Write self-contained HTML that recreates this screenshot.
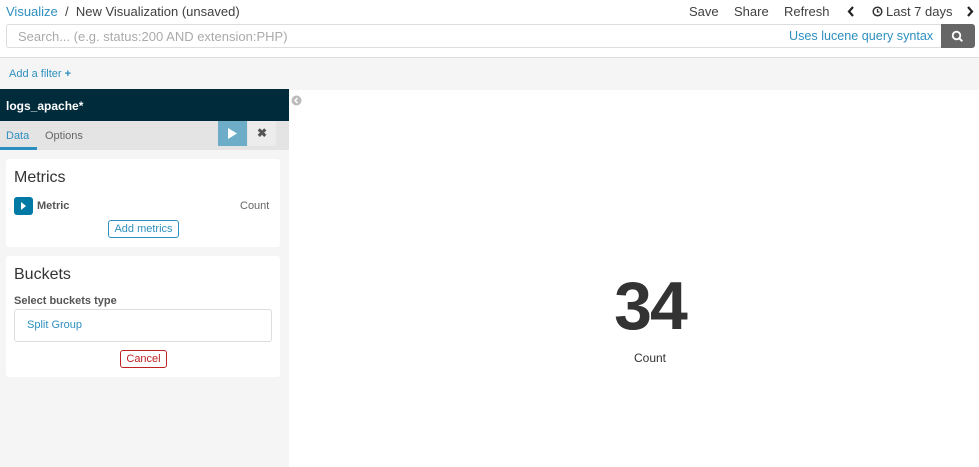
<!DOCTYPE html>
<html><head><style>
*{box-sizing:border-box;margin:0;padding:0}
body{width:979px;height:467px;overflow:hidden;background:#fff;font-family:"Liberation Sans",sans-serif;font-size:12px;color:#3f3f3f;position:relative}
.a{position:absolute}
</style></head><body>
<div class="a" style="left:6px;top:4px;font-size:13px;"><span style="color:#2d8fbf">Visualize</span> &nbsp;/ &nbsp;New Visualization (unsaved)</div>
<div class="a" style="left:689px;top:4px;font-size:13px;word-spacing:0">Save</div>
<div class="a" style="left:734px;top:4px;font-size:13px">Share</div>
<div class="a" style="left:784px;top:4px;font-size:13px">Refresh</div>
<svg class="a" style="left:847px;top:6px" width="8" height="11"><path d="M6 1L2 5.5 6 10" fill="none" stroke="#222" stroke-width="2.2"/></svg>
<svg class="a" style="left:872px;top:6px" width="11" height="11"><circle cx="5.5" cy="5.5" r="4.3" fill="none" stroke="#333" stroke-width="1.5"/><path d="M5.5 3v3h2" fill="none" stroke="#333" stroke-width="1.3"/></svg>
<div class="a" style="left:886px;top:4px;font-size:13px">Last 7 days</div>
<svg class="a" style="left:966px;top:6px" width="8" height="11"><path d="M2 1L6 5.5 2 10" fill="none" stroke="#222" stroke-width="2.2"/></svg>
<div class="a" style="left:6px;top:24px;width:936px;height:24px;border:1px solid #ddd;border-radius:3px"></div>
<div class="a" style="left:18px;top:29px;font-size:13px;color:#aaa">Search... (e.g. status:200 AND extension:PHP)</div>
<div class="a" style="left:789px;top:29px;font-size:12.6px;color:#2d8fbf">Uses lucene query syntax</div>
<div class="a" style="left:941px;top:24px;width:34px;height:24px;background:#666;border-radius:0 3px 3px 0"></div>
<svg class="a" style="left:951px;top:30px" width="13" height="13"><circle cx="5.5" cy="5.5" r="3.8" fill="none" stroke="#fff" stroke-width="1.8"/><path d="M8.3 8.3l3 3" stroke="#fff" stroke-width="2"/></svg>
<div class="a" style="left:0;top:57px;width:979px;height:33px;background:#f5f5f5;border-top:1px solid #ddd"></div>
<div class="a" style="left:9px;top:68px;font-size:11px;color:#2d8fbf">Add a filter <b>+</b></div>
<div class="a" style="left:0;top:89px;width:289px;height:378px;background:#f5f5f5"></div>
<div class="a" style="left:0;top:89px;width:289px;height:32px;background:#002b3b;color:#fff;font-weight:bold;font-size:12px;padding:10px 6px">logs_apache*</div>
<svg class="a" style="left:291px;top:95px" width="11" height="11"><circle cx="5.5" cy="5.5" r="5" fill="#bbb"/><path d="M6.5 3L4 5.5 6.5 8" fill="none" stroke="#fff" stroke-width="1.5"/></svg>
<div class="a" style="left:0;top:121px;width:289px;height:29px;background:#e4e4e4"></div>
<div class="a" style="left:6px;top:130px;font-size:11px;color:#2d8fbf">Data</div>
<div class="a" style="left:0;top:147px;width:37px;height:3px;background:#2d8fbf"></div>
<div class="a" style="left:45px;top:130px;font-size:11px;color:#666">Options</div>
<div class="a" style="left:218px;top:121px;width:29px;height:25px;background:#6eadc8"></div>
<svg class="a" style="left:227px;top:128px" width="11" height="11"><path d="M1 0L10 5.5 1 11z" fill="#fff"/></svg>
<div class="a" style="left:248px;top:121px;width:28px;height:25px;background:#ececec;text-align:center;line-height:25px;font-weight:bold;color:#555">&#x2716;</div>
<div class="a" style="left:6px;top:159px;width:274px;height:88px;background:#fff;border-radius:3px"></div>
<div class="a" style="left:14px;top:169px;font-size:16px;color:#333">Metrics</div>
<div class="a" style="left:14px;top:197px;width:19px;height:18px;background:#0079a5;border-radius:3px"></div>
<svg class="a" style="left:21px;top:202px" width="6" height="8"><path d="M0 0L5 4 0 8z" fill="#fff"/></svg>
<div class="a" style="left:37px;top:200px;font-size:11px;font-weight:bold;color:#555">Metric</div>
<div class="a" style="left:240px;top:200px;font-size:11px;color:#666">Count</div>
<div class="a" style="left:108px;top:220px;width:71px;height:18px;border:1px solid #2d8fbf;border-radius:3px;font-size:11px;color:#2d8fbf;text-align:center;line-height:16px">Add metrics</div>
<div class="a" style="left:6px;top:256px;width:274px;height:121px;background:#fff;border-radius:3px"></div>
<div class="a" style="left:14px;top:266px;font-size:16px;color:#333">Buckets</div>
<div class="a" style="left:14px;top:295px;font-size:11px;font-weight:bold;color:#555">Select buckets type</div>
<div class="a" style="left:14px;top:309px;width:258px;height:33px;border:1px solid #ddd;border-radius:3px;font-size:11px;color:#2d8fbf;padding:9px 12px">Split Group</div>
<div class="a" style="left:120px;top:350px;width:47px;height:18px;border:1px solid #bf2222;border-radius:3px;font-size:11px;color:#bf2222;text-align:center;line-height:16px">Cancel</div>
<div class="a" style="left:550px;top:267px;width:200px;text-align:center;font-size:68px;font-weight:bold;color:#333;letter-spacing:-2px">34</div>
<div class="a" style="left:550px;top:351px;width:200px;text-align:center;font-size:12px;color:#333">Count</div>
</body></html>
